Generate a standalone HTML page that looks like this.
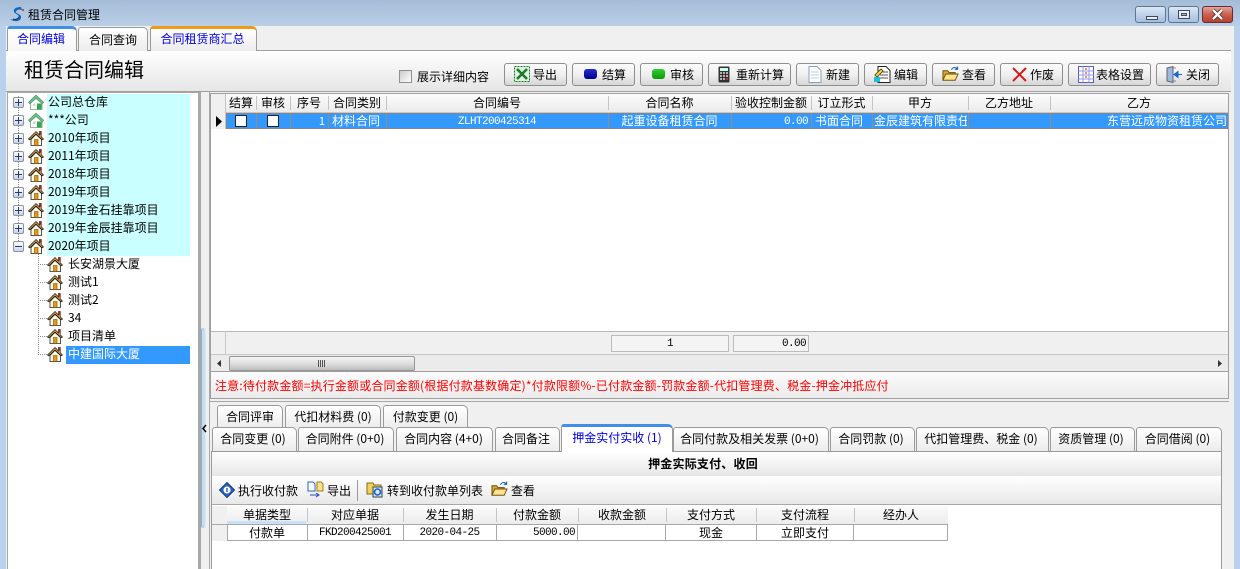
<!DOCTYPE html>
<html lang="zh"><head><meta charset="utf-8"><title>租赁合同管理</title>
<style>
html,body{margin:0;padding:0;width:1240px;height:569px;overflow:hidden;background:#b9d1ea}
body{position:relative;font:12px/16px "WenQuanYi Zen Hei","Noto Sans CJK SC",sans-serif;color:#000}
div,span,svg.a{position:absolute;box-sizing:border-box}
.t{white-space:nowrap;height:16px}
.c{text-align:center}.r{text-align:right}
.m{font:11px/16px 'Liberation Mono',monospace;letter-spacing:-.6px}
.btn{top:63px;height:23px;border:1px solid #8f8f8f;border-radius:3px;background:linear-gradient(#fbfbfb,#f0f0f0 50%,#d6d6d6)}
.btn span{top:3px;white-space:nowrap}
.btn svg{position:absolute;left:9px;top:2px}
.tab{height:24px;border:1px solid #9a9a9a;border-bottom:0;border-radius:3px 5px 0 0;background:linear-gradient(#fff,#ececec);text-align:center;padding-top:3px;white-space:nowrap}
.hd{background:linear-gradient(#fbfbfb,#ececec);height:18px}
.sep{width:1px;background:#c4c4c4}
.ex{left:13px;width:11px;height:11px;border:1px solid #8a93a8;background:linear-gradient(#fff,#c9d3e6);border-radius:2px}
.ex:before{content:"";position:absolute;left:1px;top:4px;width:7px;height:1px;background:#2a3b66}
.ex.p:after{content:"";position:absolute;left:4px;top:1px;width:1px;height:7px;background:#2a3b66}
.cb{width:12px;height:12px;background:#fff;border:1px solid #222;top:115px}
.dv{background-image:linear-gradient(#888 50%,transparent 50%);background-size:1px 2px;width:1px}
.dh{background-image:linear-gradient(90deg,#888 50%,transparent 50%);background-size:2px 1px;height:1px}
.wb{top:6px;width:31px;height:17px;border:1px solid #5f7591;border-radius:3px;background:linear-gradient(#dce8f5,#c2d4e9 45%,#a6bfdc)}
</style></head><body>
<svg width="0" height="0" style="position:absolute"><defs>
<symbol id="h" viewBox="0 0 16 16"><path d="M3 9.500v6h10.500v-6L8 4.400z" fill="#fffbe8" stroke="#222" stroke-width=".8"/><path d="M8 1.500 .5 9l1.300.8L8 4l6.200 5.800 1.300-.8-2.300-2.300V1.500h-1.700v3.500z" fill="#d8a85a" stroke="#1e1408" stroke-width=".7"/><rect x="11.500" y="1.200" width="1.500" height="3.500" fill="#b01c1c"/><rect x="6.500" y="9.500" width="3.500" height="6" fill="#e49a16" stroke="#7b4d08" stroke-width=".6"/></symbol>
<symbol id="g" viewBox="0 0 16 16"><path d="M2.500 9v6.500h11.500V9L8 4z" fill="#fff" stroke="#7f9a88" stroke-width=".8"/><path d="M8 1 .4 8.300l1.400 1.500L8 4.500l6.300 5.300 1.400-1.500z" fill="#66c388" stroke="#5a8a6a" stroke-width=".6"/><rect x="9" y="9.500" width="4.500" height="6" fill="#2fa84f"/><rect x="5" y="9.500" width="2.500" height="2.500" fill="#c9d8c9"/></symbol>
<symbol id="o" viewBox="0 0 18 18"><path d="M1 5h5l1.500 2H14v8H1z" fill="#d9a92a" stroke="#6a5010"/><path d="M1 15l3-6.500h13L14 15z" fill="#ffe28a" stroke="#6a5010"/><path d="M10 4c1-2 3-3 5-2l1.500 1M16.500 .5V3.500h-3" fill="none" stroke="#1b5fc0" stroke-width="1.100"/></symbol>
</defs></svg>

<!-- title bar -->
<div style="left:0;top:0;width:1240px;height:26px;background:linear-gradient(#a5bcd8,#b9cfe6)"></div>
<svg class="a" style="left:9px;top:6px" width="16" height="16" viewBox="0 0 16 16"><path d="M12 1C6 1 3 4 6 7c2 2 5 2 3 5-1 2-5 2-8 1 3 3 10 3 11-1 1-4-5-4-5-6 0-2 3-3 6-2z" fill="#1565b8"/><path d="M4 13c2 1 5 0 6-2" stroke="#153a66" fill="none"/><circle cx="14" cy="4" r="1" fill="#c62828"/></svg>
<span class="t" style="left:28px;top:7px">租赁合同管理</span>
<div class="wb" style="left:1135px"><div style="left:10px;top:9px;width:12px;height:4px;background:#e8eef6;border:1px solid #3b4a60"></div></div>
<div class="wb" style="left:1168px"><div style="left:9px;top:3px;width:12px;height:9px;background:#e8eef6;border:1px solid #3b4a60"><div style="left:2px;top:2px;width:6px;height:3px;background:#a9bdd6;border:1px solid #3b4a60"></div></div></div>
<div class="wb" style="left:1202px;border-color:#6b2a35;background:linear-gradient(#e0a69b,#cc5f50 50%,#b9402f)"></div>
<svg class="a" style="left:1210px;top:8px" width="15" height="13" viewBox="0 0 15 13"><path d="M3 2 12 11M12 2 3 11" stroke="#4a1d18" stroke-width="3.800"/><path d="M3 2 12 11M12 2 3 11" stroke="#fff" stroke-width="2.400"/></svg>

<!-- main bg + tab strip -->
<div style="left:6px;top:26px;width:1228px;height:543px;background:#f0f0f0"></div>
<div style="left:6px;top:50px;width:1225px;height:1px;background:#a0a0a0"></div>
<div class="tab" style="left:7px;top:26px;width:70px;height:25px;border-top:3px solid #3f8fe8;color:#0000e0;background:linear-gradient(#fff,#f6f6f6);padding:2px 2px 0 0">合同编辑</div>
<div class="tab" style="left:78px;top:27px;width:70px;color:#000;padding-top:4px">合同查询</div>
<div class="tab" style="left:150px;top:26px;width:107px;height:25px;border-top:3px solid #ee9a12;color:#0000e0;padding:2px 2px 0 0">合同租赁商汇总</div>

<div style="left:6px;top:51px;width:1225px;height:40px;background:linear-gradient(#fff,#e6e6e6)"></div>
<div style="left:6px;top:91px;width:1225px;height:1px;background:#a0a0a0"></div>
<span class="t" style="left:24px;top:59px;font-size:20px;line-height:20px;height:20px">租赁合同编辑</span>

<!-- toolbar -->
<div style="left:399px;top:70px;width:13px;height:13px;border:1px solid #8f8f8f;background:linear-gradient(135deg,#ccc,#fff)"></div>
<span class="t" style="left:417px;top:69px">展示详细内容</span>
<div class="btn" style="left:504px;width:63px"><svg width="16" height="16" viewBox="0 0 16 16"><rect x=".5" y=".5" width="15" height="15" fill="#dff0df" stroke="#1d7a2c" stroke-dasharray="2 1"/><path d="M3 3l10 10M13 3 3 13" stroke="#1d7a2c" stroke-width="2.500"/></svg><span style="left:28px">导出</span></div>
<div class="btn" style="left:572px;width:63px"><div style="left:11px;top:5px;width:13px;height:10px;border-radius:3px;background:linear-gradient(#2a2ad0,#00008c)"></div><span style="left:29px">结算</span></div>
<div class="btn" style="left:640px;width:63px"><div style="left:11px;top:5px;width:13px;height:10px;border-radius:3px;background:linear-gradient(#30d030,#0a9a0a)"></div><span style="left:29px">审核</span></div>
<div class="btn" style="left:708px;width:83px"><svg width="12" height="17" viewBox="0 0 12 17" style="left:9px"><rect x=".5" y=".5" width="11" height="16" rx="1" fill="#333"/><rect x="2" y="2" width="8" height="3" fill="#cfe"/><path d="M2 7h2M5 7h2M8 7h2M2 10h2M5 10h2M8 10h2M2 13h2M5 13h2" stroke="#ddd" stroke-width="1.500"/><path d="M8 13h2" stroke="#e33" stroke-width="1.500"/></svg><span style="left:27px">重新计算</span></div>
<div class="btn" style="left:796px;width:63px"><svg width="14" height="17" viewBox="0 0 14 17" style="left:11px"><path d="M1 .5h8l4 4v12H1z" fill="#fff" stroke="#8aa0c0"/><path d="M3 6h8M3 9h8M3 12h8" stroke="#b8d0ea"/></svg><span style="left:29px">新建</span></div>
<div class="btn" style="left:864px;width:63px"><svg width="17" height="17" viewBox="0 0 17 17"><path d="M4 .5h8l4 4v12H4z" fill="#fff" stroke="#222"/><path d="M6 6h8M6 9h8M6 12h8" stroke="#555"/><path d="M1 9l6-6 2 2-6 6z" fill="#ffe14a" stroke="#6a5010"/><rect x="0" y="11" width="6" height="5" fill="#18c0d8"/></svg><span style="left:29px">编辑</span></div>
<div class="btn" style="left:932px;width:63px"><svg width="17" height="17"><use href="#o"/></svg><span style="left:29px">查看</span></div>
<div class="btn" style="left:1000px;width:63px"><svg width="15" height="15" viewBox="0 0 15 15" style="left:11px;top:3px"><path d="M1 1l13 13M14 1 1 14" stroke="#d41a1a" stroke-width="2"/></svg><span style="left:29px">作废</span></div>
<div class="btn" style="left:1068px;width:83px"><svg width="16" height="17" viewBox="0 0 16 17"><rect x=".5" y=".5" width="15" height="16" fill="#fff" stroke="#5a5ad0"/><path d="M.5 5h15M.5 9h15M.5 13h15M5 .5v16M11 .5v16" stroke="#9a9ae0"/><path d="M7 3h2M7 7h2M7 11h2" stroke="#c22"/></svg><span style="left:27px">表格设置</span></div>
<div class="btn" style="left:1156px;width:63px"><svg width="17" height="17" viewBox="0 0 17 17" style="left:9px"><path d="M1 2l6-1.500v16L1 15z" fill="#9db8e0" stroke="#666"/><path d="M7 2h3M7 15h3" stroke="#888"/><path d="M16 8.500h-4V5.500l-4 3 4 3v-3" fill="#1565d8" stroke="#1565d8"/></svg><span style="left:29px">关闭</span></div>

<!-- tree -->
<div style="left:7px;top:92px;width:192px;height:477px;background:#fff;border:1px solid #a8a8a8;border-bottom:0"></div>
<div style="left:47px;top:94px;width:143px;height:162px;background:#caffff"></div>
<div style="left:66px;top:346px;width:124px;height:18px;background:#3399ff"></div>
<div class="dv" style="left:18px;top:96px;height:150px"></div>
<div class="dv" style="left:38px;top:254px;height:101px"></div>
<div class="dh" style="left:38px;top:264px;width:10px"></div><div class="dh" style="left:38px;top:282px;width:10px"></div><div class="dh" style="left:38px;top:300px;width:10px"></div><div class="dh" style="left:38px;top:318px;width:10px"></div><div class="dh" style="left:38px;top:336px;width:10px"></div><div class="dh" style="left:38px;top:354px;width:10px"></div>
<div class="ex p" style="top:97px"></div><div class="ex p" style="top:115px"></div><div class="ex p" style="top:133px"></div><div class="ex p" style="top:151px"></div><div class="ex p" style="top:169px"></div><div class="ex p" style="top:187px"></div><div class="ex p" style="top:205px"></div><div class="ex p" style="top:223px"></div><div class="ex" style="top:241px"></div>
<svg class="a" style="left:28px;top:94px" width="16" height="16"><use href="#g"/></svg>
<svg class="a" style="left:28px;top:112px" width="16" height="16"><use href="#g"/></svg>
<svg class="a" style="left:28px;top:130px" width="16" height="16"><use href="#h"/></svg>
<svg class="a" style="left:28px;top:148px" width="16" height="16"><use href="#h"/></svg>
<svg class="a" style="left:28px;top:166px" width="16" height="16"><use href="#h"/></svg>
<svg class="a" style="left:28px;top:184px" width="16" height="16"><use href="#h"/></svg>
<svg class="a" style="left:28px;top:202px" width="16" height="16"><use href="#h"/></svg>
<svg class="a" style="left:28px;top:220px" width="16" height="16"><use href="#h"/></svg>
<svg class="a" style="left:28px;top:238px" width="16" height="16"><use href="#h"/></svg>
<svg class="a" style="left:47px;top:256px" width="16" height="16"><use href="#h"/></svg>
<svg class="a" style="left:47px;top:274px" width="16" height="16"><use href="#h"/></svg>
<svg class="a" style="left:47px;top:292px" width="16" height="16"><use href="#h"/></svg>
<svg class="a" style="left:47px;top:310px" width="16" height="16"><use href="#h"/></svg>
<svg class="a" style="left:47px;top:328px" width="16" height="16"><use href="#h"/></svg>
<svg class="a" style="left:47px;top:346px" width="16" height="16"><use href="#h"/></svg>
<span class="t" style="left:48px;top:94px">公司总仓库</span>
<span class="t" style="left:48px;top:112px">***公司</span>
<span class="t" style="left:48px;top:130px">2010年项目</span>
<span class="t" style="left:48px;top:148px">2011年项目</span>
<span class="t" style="left:48px;top:166px">2018年项目</span>
<span class="t" style="left:48px;top:184px">2019年项目</span>
<span class="t" style="left:48px;top:202px">2019年金石挂靠项目</span>
<span class="t" style="left:48px;top:220px">2019年金辰挂靠项目</span>
<span class="t" style="left:48px;top:238px">2020年项目</span>
<span class="t" style="left:68px;top:256px">长安湖景大厦</span>
<span class="t" style="left:68px;top:274px">测试1</span>
<span class="t" style="left:68px;top:292px">测试2</span>
<span class="t" style="left:68px;top:310px">34</span>
<span class="t" style="left:68px;top:328px">项目清单</span>
<span class="t" style="left:68px;top:346px;color:#fff">中建国际大厦</span>

<!-- splitter -->
<div style="left:199px;top:92px;width:11px;height:477px;background:#f0f0f0"></div>
<div style="left:198px;top:92px;width:3px;height:477px;background:#a8a8a8"></div>
<div style="left:209px;top:92px;width:1px;height:477px;background:#a8a8a8"></div>
<div style="left:201px;top:328px;width:5px;height:200px;background:#c5dcf2;border-left:1px solid #8ab0d4;border-right:1px solid #dfeaf5;border-radius:2px"></div>
<svg class="a" style="left:202px;top:424px" width="5" height="9" viewBox="0 0 5 9"><path d="M4 1 1 4.500 4 8" stroke="#000" stroke-width="1.500" fill="none"/></svg>

<!-- top grid -->
<div style="left:210px;top:93px;width:1019px;height:279px;background:#fff;border:1px solid #a0a0a0"></div>
<div class="hd" style="left:211px;top:94px;width:1017px"></div>
<div style="left:211px;top:112px;width:1017px;height:1px;background:#c8c8c8"></div>
<div style="left:211px;top:94px;width:15px;height:35px;background:#f0f0f0;border-right:1px solid #c4c4c4"></div>
<div class="sep" style="left:256px;top:96px;height:14px"></div><div class="sep" style="left:290px;top:96px;height:14px"></div><div class="sep" style="left:328px;top:96px;height:14px"></div><div class="sep" style="left:386px;top:96px;height:14px"></div><div class="sep" style="left:608px;top:96px;height:14px"></div><div class="sep" style="left:731px;top:96px;height:14px"></div><div class="sep" style="left:811px;top:96px;height:14px"></div><div class="sep" style="left:872px;top:96px;height:14px"></div><div class="sep" style="left:968px;top:96px;height:14px"></div><div class="sep" style="left:1050px;top:96px;height:14px"></div>
<span class="t c" style="left:226px;top:95px;width:30px">结算</span>
<span class="t c" style="left:256px;top:95px;width:34px">审核</span>
<span class="t c" style="left:290px;top:95px;width:38px">序号</span>
<span class="t c" style="left:328px;top:95px;width:58px">合同类别</span>
<span class="t c" style="left:386px;top:95px;width:222px">合同编号</span>
<span class="t c" style="left:608px;top:95px;width:123px">合同名称</span>
<span class="t c" style="left:731px;top:95px;width:80px">验收控制金额</span>
<span class="t c" style="left:811px;top:95px;width:61px">订立形式</span>
<span class="t c" style="left:872px;top:95px;width:96px">甲方</span>
<span class="t c" style="left:968px;top:95px;width:82px">乙方地址</span>
<span class="t c" style="left:1050px;top:95px;width:178px">乙方</span>
<!-- selected row -->
<div style="left:226px;top:113px;width:1002px;height:16px;background:#3399ff;border:1px dotted #c9722a"></div>
<div style="left:256px;top:113px;width:1px;height:16px;background:#9a8a78"></div><div style="left:290px;top:113px;width:1px;height:16px;background:#9a8a78"></div><div style="left:328px;top:113px;width:1px;height:16px;background:#9a8a78"></div><div style="left:386px;top:113px;width:1px;height:16px;background:#9a8a78"></div><div style="left:608px;top:113px;width:1px;height:16px;background:#9a8a78"></div><div style="left:731px;top:113px;width:1px;height:16px;background:#9a8a78"></div><div style="left:811px;top:113px;width:1px;height:16px;background:#9a8a78"></div><div style="left:872px;top:113px;width:1px;height:16px;background:#9a8a78"></div><div style="left:968px;top:113px;width:1px;height:16px;background:#9a8a78"></div><div style="left:1050px;top:113px;width:1px;height:16px;background:#9a8a78"></div>
<svg class="a" style="left:216px;top:116px" width="6" height="11"><path d="M0 0l6 5.500L0 11z" fill="#000"/></svg>
<div class="cb" style="left:235px"></div><div class="cb" style="left:267px"></div>
<span class="t r" style="left:290px;top:113px;width:35px;color:#fff;font-size:11px">1</span>
<span class="t" style="left:332px;top:113px;color:#fff">材料合同</span>
<span class="t c m" style="left:386px;top:114px;width:222px;color:#fff">ZLHT200425314</span>
<span class="t c" style="left:608px;top:113px;width:123px;color:#fff">起重设备租赁合同</span>
<span class="t r m" style="left:731px;top:114px;width:77px;color:#fff">0.00</span>
<span class="t" style="left:815px;top:113px;color:#fff">书面合同</span>
<span class="t" style="left:874px;top:113px;width:93px;overflow:hidden;color:#fff">金辰建筑有限责任公司</span>
<span class="t r" style="left:1050px;top:113px;width:177px;color:#fff">东营远成物资租赁公司</span>
<!-- footer -->
<div style="left:211px;top:331px;width:1017px;height:24px;background:#f0f0f0;border-top:1px solid #b8b8b8;border-bottom:1px solid #c8c8c8"></div>
<div style="left:225px;top:331px;width:1px;height:24px;background:#c8c8c8"></div>
<div style="left:611px;top:335px;width:118px;height:17px;border:1px solid #bcbcbc;background:#f4f4f4"></div>
<div style="left:733px;top:335px;width:76px;height:17px;border:1px solid #bcbcbc;background:#f4f4f4"></div>
<span class="t c m" style="left:611px;top:336px;width:118px">1</span>
<span class="t r m" style="left:733px;top:336px;width:73px">0.00</span>
<!-- scrollbar -->
<div style="left:211px;top:355px;width:1017px;height:16px;background:#ebebeb"></div>
<div style="left:229px;top:356px;width:186px;height:15px;border:1px solid #979797;border-radius:2px;background:linear-gradient(#f4f4f4,#dcdcdc 55%,#bdbdbd)"></div>
<div style="left:318px;top:360px;width:7px;height:7px;background:repeating-linear-gradient(90deg,#555 0 1px,transparent 1px 2px)"></div>
<svg class="a" style="left:217px;top:360px" width="4" height="7"><path d="M4 0 0 3.500 4 7z" fill="#333"/></svg>
<svg class="a" style="left:1218px;top:360px" width="4" height="7"><path d="M0 0l4 3.500L0 7z" fill="#333"/></svg>
<!-- notice -->
<div style="left:210px;top:372px;width:1019px;height:27px;background:linear-gradient(#fbfbfb,#ebebeb);border:1px solid #a0a0a0;border-top:0"></div>
<span class="t" style="left:215px;top:378px;color:#f00;letter-spacing:.17px">注意:待付款金额=执行金额或合同金额(根据付款基数确定)*付款限额%-已付款金额-罚款金额-代扣管理费、税金-押金冲抵应付</span>
<div style="left:210px;top:401px;width:1019px;height:1px;background:#a8a8a8"></div>

<!-- lower tabs -->
<div class="tab" style="left:217px;top:405px;width:66px;height:23px">合同评审</div>
<div class="tab" style="left:285px;top:405px;width:96px;height:23px">代扣材料费 (0)</div>
<div class="tab" style="left:383px;top:405px;width:85px;height:23px">付款变更 (0)</div>
<div style="left:211px;top:451px;width:1011px;height:118px;background:#fff;border:1px solid #9a9a9a;border-bottom:0"></div>
<div class="tab" style="left:212px;top:427px;width:85px;padding-right:3px">合同变更 (0)</div>
<div class="tab" style="left:298px;top:427px;width:96px;padding-right:2px">合同附件 (0+0)</div>
<div class="tab" style="left:396px;top:427px;width:97px;padding-right:2px">合同内容 (4+0)</div>
<div class="tab" style="left:495px;top:427px;width:65px;padding-right:3px">合同备注</div>
<div class="tab" style="left:561px;top:424px;width:112px;height:28px;border-top:3px solid #3f8fe8;border-bottom:0;color:#0000e0;background:#fff;padding-top:3px;z-index:2">押金实付实收 (1)</div>
<div class="tab" style="left:673px;top:427px;width:156px;padding-right:3px">合同付款及相关发票 (0+0)</div>
<div class="tab" style="left:830px;top:427px;width:85px;padding-right:3px">合同罚款 (0)</div>
<div class="tab" style="left:916px;top:427px;width:133px;padding-right:3px">代扣管理费、税金 (0)</div>
<div class="tab" style="left:1050px;top:427px;width:85px;padding-right:3px">资质管理 (0)</div>
<div class="tab" style="left:1136px;top:427px;width:86px;padding-right:3px">合同借阅 (0)</div>

<!-- panel -->
<div style="left:212px;top:452px;width:1009px;height:24px;background:linear-gradient(#fff,#e6e6e6)"></div>
<span class="t c" style="left:212px;top:456px;width:982px;font-weight:bold;letter-spacing:.2px">押金实际支付、收回</span>
<div style="left:212px;top:476px;width:1009px;height:29px;background:linear-gradient(#fff,#e8e8e8);border-bottom:1px solid #a8a8a8"></div>
<svg class="a" style="left:219px;top:482px" width="16" height="16" viewBox="0 0 16 16"><path d="M8 .5 15.500 8 8 15.500 .5 8z" fill="#2b63c8" stroke="#123a80"/><circle cx="8" cy="8" r="3.500" fill="#fff"/><path d="M8 6v4" stroke="#2b63c8" stroke-width="1.500"/></svg>
<span class="t" style="left:238px;top:483px">执行收付款</span>
<svg class="a" style="left:307px;top:481px" width="17" height="17" viewBox="0 0 17 17"><path d="M1 1h5l2 2v7H1z" fill="#fff" stroke="#2b63c8"/><path d="M10 1h4l2 2v7h-6z" fill="#ffe28a" stroke="#a07a10"/><path d="M3 14h9M9 12l3 2-3 2" stroke="#1b4fb0" fill="none"/></svg>
<span class="t" style="left:327px;top:483px">导出</span>
<div style="left:357px;top:480px;width:1px;height:21px;background:#999"></div>
<svg class="a" style="left:366px;top:481px" width="17" height="17" viewBox="0 0 17 17"><path d="M1 2h6l1 2h7v9H1z" fill="#f2cf5f" stroke="#8a6a10"/><rect x="7" y="6" width="9" height="10" fill="#dce8f8" stroke="#345"/><circle cx="11.500" cy="11" r="3" fill="none" stroke="#1565c8" stroke-width="1.600"/></svg>
<span class="t" style="left:387px;top:483px">转到收付款单列表</span>
<svg class="a" style="left:491px;top:481px" width="17" height="17"><use href="#o"/></svg>
<span class="t" style="left:511px;top:483px">查看</span>

<!-- bottom grid -->
<div class="hd" style="left:212px;top:506px;width:736px"></div>
<div style="left:212px;top:506px;width:15px;height:35px;background:#f0f0f0"></div>
<div style="left:227px;top:521px;width:79px;height:3px;background:#c5e2f8"></div>
<div class="sep" style="left:307px;top:508px;height:14px"></div><div class="sep" style="left:403px;top:508px;height:14px"></div><div class="sep" style="left:496px;top:508px;height:14px"></div><div class="sep" style="left:578px;top:508px;height:14px"></div><div class="sep" style="left:666px;top:508px;height:14px"></div><div class="sep" style="left:756px;top:508px;height:14px"></div><div class="sep" style="left:854px;top:508px;height:14px"></div>
<span class="t c" style="left:227px;top:507px;width:80px">单据类型</span>
<span class="t c" style="left:307px;top:507px;width:96px">对应单据</span>
<span class="t c" style="left:403px;top:507px;width:93px">发生日期</span>
<span class="t c" style="left:496px;top:507px;width:82px">付款金额</span>
<span class="t c" style="left:578px;top:507px;width:88px">收款金额</span>
<span class="t c" style="left:666px;top:507px;width:90px">支付方式</span>
<span class="t c" style="left:756px;top:507px;width:98px">支付流程</span>
<span class="t c" style="left:854px;top:507px;width:94px">经办人</span>
<div style="left:227px;top:524px;width:721px;height:17px;border:1px solid #a8a8a8"></div>
<div style="left:212px;top:524px;width:736px;height:1px;background:#a8a8a8"></div>
<div style="left:307px;top:524px;width:1px;height:17px;background:#a8a8a8"></div><div style="left:403px;top:524px;width:1px;height:17px;background:#a8a8a8"></div><div style="left:496px;top:524px;width:1px;height:17px;background:#a8a8a8"></div><div style="left:577px;top:524px;width:1px;height:17px;background:#a8a8a8"></div><div style="left:665px;top:524px;width:1px;height:17px;background:#a8a8a8"></div><div style="left:756px;top:524px;width:1px;height:17px;background:#a8a8a8"></div><div style="left:853px;top:524px;width:1px;height:17px;background:#a8a8a8"></div>
<span class="t c" style="left:227px;top:525px;width:80px">付款单</span>
<span class="t c m" style="left:307px;top:525px;width:96px">FKD200425001</span>
<span class="t c m" style="left:403px;top:525px;width:93px">2020-04-25</span>
<span class="t r m" style="left:496px;top:525px;width:79px">5000.00</span>
<span class="t c" style="left:666px;top:525px;width:90px">现金</span>
<span class="t c" style="left:756px;top:525px;width:98px">立即支付</span>
</body></html>
